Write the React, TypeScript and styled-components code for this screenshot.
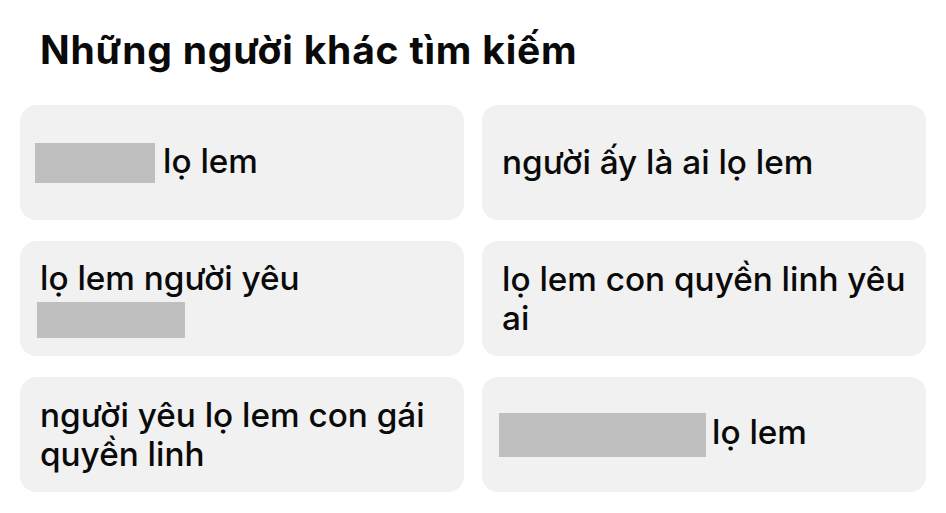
import React from "react";
import styled, { createGlobalStyle } from "styled-components";

const Global = createGlobalStyle`
  html, body { margin: 0; padding: 0; background: #ffffff; }
  body { font-family: Inter, "Liberation Sans", Arial, sans-serif; color: #0a0a0a; }
`;

const Page = styled.div`
  width: 946px;
  height: 513px;
  box-sizing: border-box;
  padding: 24px 20px 0 20px;
  display: flex;
  flex-direction: column;
`;

const Title = styled.h1`
  margin: 0 0 0 20px;
  font-size: 39px;
  line-height: 52px;
  font-weight: 700;
  letter-spacing: 0.8px;
  color: #0a0a0a;
`;

const Grid = styled.div`
  margin-top: 29px;
  display: grid;
  grid-template-columns: 444px 444px;
  grid-auto-rows: 115px;
  column-gap: 18px;
  row-gap: 21px;
`;

const Card = styled.div<{ $pad?: number }>`
  background: #f1f1f1;
  border-radius: 16px;
  display: flex;
  align-items: center;
  padding: 0 12px 0 ${(p) => p.$pad ?? 20}px;
  box-sizing: border-box;
`;

const Text = styled.div`
  font-size: 33.3px;
  line-height: 39px;
  font-weight: 500;
  color: #0a0a0a;
`;

const Redact = styled.span<{ $w: number; $h: number; $gap: number }>`
  display: inline-block;
  width: ${(p) => p.$w}px;
  height: ${(p) => p.$h}px;
  background: #bfbfbf;
  vertical-align: middle;
  margin-right: ${(p) => p.$gap}px;
`;

const BlockRedact = styled.span<{ $w: number; $h: number }>`
  display: block;
  width: ${(p) => p.$w}px;
  height: ${(p) => p.$h}px;
  background: #bfbfbf;
  margin-top: 4px;
  margin-left: -3px;
`;

export default function App() {
  return (
    <>
      <Global />
      <Page>
        <Title>Những người khác tìm kiếm</Title>
        <Grid>
          <Card $pad={15}>
            <Text>
              <Redact $w={120} $h={40} $gap={8} />
              lọ lem
            </Text>
          </Card>
          <Card>
            <Text>người ấy là ai lọ lem</Text>
          </Card>
          <Card>
            <Text>
              lọ lem người yêu
              <BlockRedact $w={148} $h={36} />
            </Text>
          </Card>
          <Card>
            <Text>lọ lem con quyền linh yêu ai</Text>
          </Card>
          <Card>
            <Text>người yêu lọ lem con gái quyền linh</Text>
          </Card>
          <Card $pad={17}>
            <Text>
              <Redact $w={207} $h={44} $gap={6} />
              lọ lem
            </Text>
          </Card>
        </Grid>
      </Page>
    </>
  );
}
